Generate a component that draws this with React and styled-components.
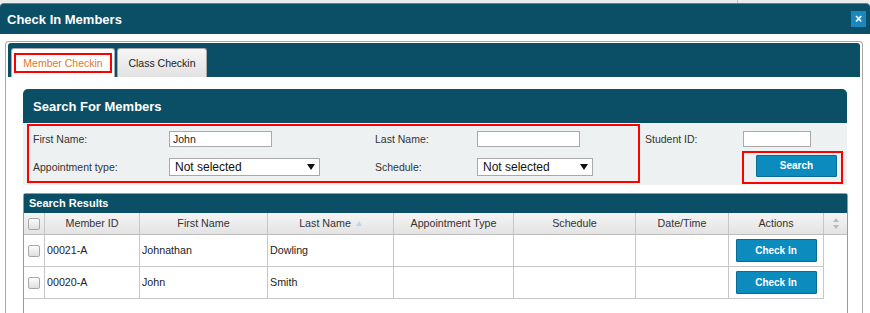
import React from "react";
import styled, { createGlobalStyle } from "styled-components";

const TEAL = "#0b4f66";
const FONT = `"Liberation Sans", Arial, sans-serif`;

const GlobalStyle = createGlobalStyle`
  html, body { margin: 0; padding: 0; overflow: hidden; background: #fff; }
  body { font-family: ${FONT}; color: #333; }
  *, *::before, *::after { box-sizing: border-box; }
`;

const Page = styled.div`
  width: 870px;
  height: 313px;
  overflow: hidden;
  display: flex;
  flex-direction: column;
  background: #fff;
`;

const TopStrip = styled.div`
  height: 3px;
  flex: none;
  background: #ececec;
  display: flex;
`;

const StripSegment = styled.div`
  width: 738px;
  border-right: 1px solid #c4c4c4;
`;

const TitleBar = styled.header`
  height: 31px;
  flex: none;
  background: ${TEAL};
  border-top: 1px solid #5f7f8b;
  border-radius: 4px 4px 0 0;
  display: flex;
  align-items: center;
  justify-content: space-between;
  padding: 0 4px 0 7px;
`;

const Title = styled.h1`
  margin: 0;
  font: bold 13px/1 ${FONT};
  color: #fff;
`;

const CloseButton = styled.button`
  width: 15px;
  height: 16px;
  padding: 0;
  border: none;
  background: #1a87bf;
  color: #fff;
  font: bold 12px/16px ${FONT};
  text-align: center;
`;

const DialogBody = styled.div`
  flex: 1;
  min-height: 0;
  padding: 7px 7px 0 5px;
  display: flex;
  flex-direction: column;
`;

const TabsBox = styled.div`
  flex: 1;
  min-height: 0;
  border: 1px solid #a9a9a9;
  border-bottom: none;
  border-radius: 4px 4px 0 0;
  padding: 1px 2px 0;
  display: flex;
  flex-direction: column;
`;

const TabStrip = styled.div`
  height: 34px;
  flex: none;
  background: ${TEAL};
  border-radius: 3px 3px 0 0;
  display: flex;
  align-items: flex-end;
  gap: 2px;
  padding-left: 3px;
`;

const Tab = styled.div`
  width: ${(p) => p.$width}px;
  height: 29px;
  border: 1px solid #a9a9a9;
  border-bottom: none;
  border-radius: 3px 3px 0 0;
  background: ${(p) =>
    p.$active ? "#fff" : "linear-gradient(#f6f6f6, #e2e2e2)"};
  padding: ${(p) => (p.$active ? "4px 2px 0" : "0")};
  display: flex;
  align-items: ${(p) => (p.$active ? "flex-start" : "center")};
  justify-content: center;
  font: 10.5px/1 ${FONT};
  color: #222;
`;

const ActiveLabel = styled.span`
  width: 99px;
  height: 20px;
  border: 2px solid #f00;
  color: #e0782a;
  display: flex;
  align-items: center;
  justify-content: center;
`;

const TabPanel = styled.div`
  flex: 1;
  min-height: 0;
  padding: 12px 13px 0 15px;
  display: flex;
  flex-direction: column;
`;

const PanelHeader = styled.div`
  height: 34px;
  flex: none;
  background: ${TEAL};
  border-radius: 5px 5px 0 0;
  display: flex;
  align-items: center;
  padding-left: 10px;
  color: #fff;
  font: bold 13px/1 ${FONT};
`;

const PanelBody = styled.div`
  height: 62px;
  flex: none;
  background: #eef1f2;
  display: flex;
  align-items: flex-start;
  padding: 1px 0 0 4px;
`;

const FieldsBox = styled.div`
  width: 613px;
  height: 59px;
  border: 2px solid #f00;
  padding: 5px 0 0 4px;
  display: grid;
  grid-template-columns: 136px 206px 102px 1fr;
  grid-template-rows: 16px 18px;
  row-gap: 11px;
  align-items: center;
`;

const Label = styled.label`
  font: 10.5px/1 ${FONT};
  color: #333;
  white-space: nowrap;
`;

const TextInput = styled.input`
  width: ${(p) => p.$width}px;
  height: 16px;
  margin: 0 0 0 ${(p) => p.$offset || 0}px;
  border: 1px solid #a9a9a9;
  background: #fff;
  padding: 0 3px;
  font: 10.5px/14px ${FONT};
  color: #222;
  outline: none;
`;

const SelectBox = styled.div`
  width: ${(p) => p.$width}px;
  height: 18px;
  border: 1px solid #a9a9a9;
  background: #fff;
  display: flex;
  align-items: center;
  justify-content: space-between;
  padding: 0 4px 0 5px;
  font: 12px/1 ${FONT};
  color: #111;
`;

const SideFields = styled.div`
  margin-left: 5px;
  padding-top: 7px;
  display: grid;
  grid-template-columns: 97px 101px;
  grid-template-rows: 16px 33px;
  row-gap: 4px;
  align-items: center;
`;

const SearchBox = styled.div`
  grid-column: 2;
  grid-row: 2;
  width: 101px;
  height: 33px;
  border: 2px solid #f00;
  padding: 2px 0 0 12px;
`;

const BlueButton = styled.button`
  width: 81px;
  height: ${(p) => p.$height}px;
  padding: 0;
  border: 1px solid #0a6c95;
  border-radius: 1px;
  background: #0b8bbe;
  color: #fff;
  font: bold 10px/1 ${FONT};
  cursor: pointer;
`;

const Results = styled.section`
  flex: 1;
  min-height: 0;
  margin: 8px -1px 0 0;
  border: 1px solid #9a9a9a;
  border-bottom: none;
  border-radius: 3px 3px 0 0;
  display: flex;
  flex-direction: column;
`;

const ResultsHeader = styled.div`
  height: 19px;
  flex: none;
  background: ${TEAL};
  color: #fff;
  font: bold 11px/1 ${FONT};
  padding-left: 5px;
  display: flex;
  align-items: center;
`;

const COLS = "21px 95px 128px 126px 120px 122px 93px 95px 23px";

const HeadRow = styled.div`
  display: grid;
  grid-template-columns: ${COLS};
  height: 22px;
  background: linear-gradient(#f5f5f5, #e3e3e3);
  border-bottom: 1px solid #bdbdbd;
`;

const HeadCell = styled.div`
  border-right: ${(p) => (p.$last ? "none" : "1px solid #c6c6c6")};
  display: flex;
  align-items: center;
  justify-content: center;
  font: 10.7px/1 ${FONT};
  color: #333;
  white-space: nowrap;
`;

const DataRow = styled.div`
  display: grid;
  grid-template-columns: ${COLS};
  height: 32px;
`;

const Cell = styled.div`
  border-right: ${(p) => (p.$spacer ? "none" : "1px solid #c6c6c6")};
  border-bottom: ${(p) => (p.$spacer ? "none" : "1px solid #c6c6c6")};
  display: flex;
  align-items: center;
  justify-content: ${(p) => (p.$center ? "center" : "flex-start")};
  padding-left: ${(p) => (p.$center ? 0 : 2)}px;
  font: 10.7px/1 ${FONT};
  color: #222;
  white-space: nowrap;
`;

const CheckBox = styled.span`
  width: 12px;
  height: 12px;
  border: 1px solid #a8a8a8;
  border-radius: 2px;
  background: linear-gradient(#fdfdfd, #dedede);
  display: block;
`;

const SortArrow = styled.svg`
  margin-left: 5px;
`;

const ScrollArrows = styled.div`
  display: flex;
  flex-direction: column;
  gap: 3px;
  align-items: center;
`;

const Triangle = ({ w = 8, h = 6, color = "#111", up = false }) => (
  <svg width={w} height={h} viewBox={`0 0 ${w} ${h}`}>
    <polygon
      points={up ? `0,${h} ${w},${h} ${w / 2},0` : `0,0 ${w},0 ${w / 2},${h}`}
      fill={color}
    />
  </svg>
);

const members = [
  { id: "00021-A", first: "Johnathan", last: "Dowling" },
  { id: "00020-A", first: "John", last: "Smith" },
];

export default function App() {
  return (
    <>
      <GlobalStyle />
      <Page>
        <TopStrip>
          <StripSegment />
        </TopStrip>
        <TitleBar>
          <Title>Check In Members</Title>
          <CloseButton aria-label="close">×</CloseButton>
        </TitleBar>
        <DialogBody>
          <TabsBox>
            <TabStrip>
              <Tab $active $width={104}>
                <ActiveLabel>Member Checkin</ActiveLabel>
              </Tab>
              <Tab $width={90}>Class Checkin</Tab>
            </TabStrip>
            <TabPanel>
              <PanelHeader>Search For Members</PanelHeader>
              <PanelBody>
                <FieldsBox>
                  <Label>First Name:</Label>
                  <TextInput $width={103} defaultValue="John" />
                  <Label>Last Name:</Label>
                  <TextInput $width={103} defaultValue="" />
                  <Label>Appointment type:</Label>
                  <SelectBox $width={151}>
                    <span>Not selected</span>
                    <Triangle />
                  </SelectBox>
                  <Label>Schedule:</Label>
                  <SelectBox $width={116}>
                    <span>Not selected</span>
                    <Triangle />
                  </SelectBox>
                </FieldsBox>
                <SideFields>
                  <Label>Student ID:</Label>
                  <TextInput $width={68} $offset={1} defaultValue="" />
                  <SearchBox>
                    <BlueButton $height={22}>Search</BlueButton>
                  </SearchBox>
                </SideFields>
              </PanelBody>
              <Results>
                <ResultsHeader>Search Results</ResultsHeader>
                <HeadRow>
                  <HeadCell>
                    <CheckBox />
                  </HeadCell>
                  <HeadCell>Member ID</HeadCell>
                  <HeadCell>First Name</HeadCell>
                  <HeadCell>
                    Last Name
                    <SortArrow width="6" height="5" viewBox="0 0 6 5">
                      <polygon points="0,5 6,5 3,0" fill="#b8d8ec" />
                    </SortArrow>
                  </HeadCell>
                  <HeadCell>Appointment Type</HeadCell>
                  <HeadCell>Schedule</HeadCell>
                  <HeadCell>Date/Time</HeadCell>
                  <HeadCell>Actions</HeadCell>
                  <HeadCell $last>
                    <ScrollArrows>
                      <Triangle w={6} h={4} color="#bbb" up />
                      <Triangle w={6} h={4} color="#bbb" />
                    </ScrollArrows>
                  </HeadCell>
                </HeadRow>
                {members.map((m) => (
                  <DataRow key={m.id}>
                    <Cell $center>
                      <CheckBox />
                    </Cell>
                    <Cell>{m.id}</Cell>
                    <Cell>{m.first}</Cell>
                    <Cell>{m.last}</Cell>
                    <Cell />
                    <Cell />
                    <Cell />
                    <Cell $center>
                      <BlueButton $height={23}>Check In</BlueButton>
                    </Cell>
                    <Cell $spacer />
                  </DataRow>
                ))}
              </Results>
            </TabPanel>
          </TabsBox>
        </DialogBody>
      </Page>
    </>
  );
}
